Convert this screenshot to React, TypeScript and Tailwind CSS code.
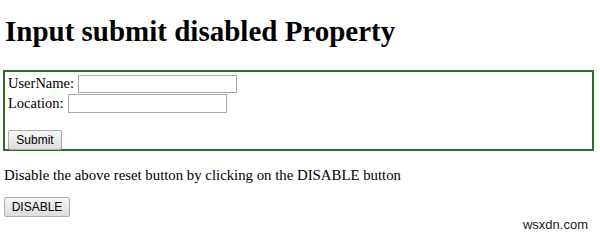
export default function App() {
  return (
    <div className="w-[600px] h-[238px] bg-white text-black font-['Liberation_Serif',serif] overflow-hidden">
      <h1 className="pt-[15px] pl-[5px] text-[29px] leading-[33px] font-bold">
        Input submit disabled Property
      </h1>
      <form
        className="mt-[22px] ml-[3px] w-[591px] h-[81px] border-2 border-[#2a6f2a] pl-[3px] pt-[2px] text-[14.5px] leading-[19px]"
        onSubmit={(e) => e.preventDefault()}
      >
        <div className="flex items-center h-[19px]">
          <span>UserName:</span>
          <input
            type="text"
            className="ml-[4px] w-[159px] h-[18px] border border-[#a9a9a9] bg-white"
          />
        </div>
        <div className="flex items-center h-[20px]">
          <span>Location:</span>
          <input
            type="text"
            className="ml-[4px] w-[159px] h-[19px] border border-[#a9a9a9] bg-white"
          />
        </div>
        <div className="mt-[17px]">
          <button
            type="submit"
            className="w-[54px] h-[20px] border border-[#adadad] rounded-[2px] bg-gradient-to-b from-[#f6f6f6] to-[#dddddd] font-['Liberation_Sans',sans-serif] text-[12px] leading-[18px]"
          >
            Submit
          </button>
        </div>
      </form>
      <p className="mt-[15px] pl-[4px] text-[14.8px] leading-[18px]">
        Disable the above reset button by clicking on the DISABLE button
      </p>
      <div className="mt-[13px] pl-[4px] pr-[12px] flex justify-between items-start">
        <button
          type="button"
          className="w-[66px] h-[20px] border border-[#adadad] rounded-[2px] bg-gradient-to-b from-[#f6f6f6] to-[#dddddd] font-['Liberation_Sans',sans-serif] text-[12px] leading-[18px]"
        >
          DISABLE
        </button>
        <span className="mt-[20px] font-['Liberation_Sans',sans-serif] text-[13px] leading-[15px] text-[#222]">
          wsxdn.com
        </span>
      </div>
    </div>
  );
}
